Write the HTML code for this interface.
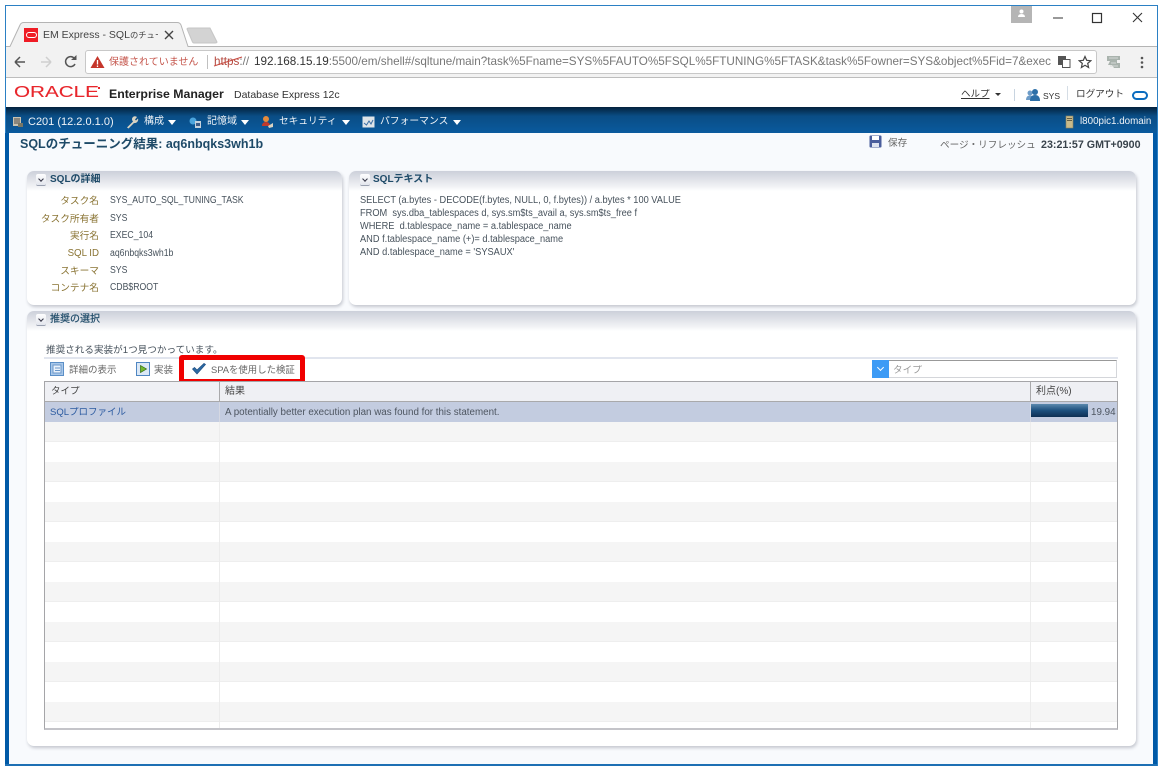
<!DOCTYPE html>
<html lang="ja"><head><meta charset="utf-8">
<style>
html,body{margin:0;padding:0;background:#fff}
body{width:1163px;height:770px;position:relative;overflow:hidden;font-family:"Liberation Sans","Noto Sans CJK JP",sans-serif;font-size:10px;color:#444}
.a{position:absolute;white-space:nowrap}
.t{position:absolute;white-space:nowrap;line-height:14px;filter:blur(.25px)}
.p{position:absolute;background:#fff;border-radius:7px;box-shadow:1px 2px 3px #c4c7cf}
.h{position:absolute;left:0;right:0;top:0;height:20px;border-radius:7px 7px 0 0;background:linear-gradient(#ccd0da,#f0f1f4 75%,#fff)}
.tg{position:absolute;width:10px;height:11px;background:linear-gradient(#fdfdfe,#e3e6ed);border-bottom:1px solid #9aa1b0;border-radius:2px}
.tg:after{content:"";position:absolute;left:2.5px;top:2.5px;width:3px;height:3px;border:solid #334;border-width:0 1px 1px 0;transform:rotate(45deg)}
.ht{color:#1e4a68;font-weight:bold;font-size:10px}
.lb{color:#8a7434;text-align:right;width:60px;font-size:9.7px}
.v{color:#47525c;font-size:10px;transform:scaleX(.87);transform-origin:left}
.sq{color:#47525c;font-size:10px;transform:scaleX(.925);transform-origin:left}
.nav{color:#f0f4f8;font-size:10px}
.tri{position:absolute;width:0;height:0;border:4px solid transparent;border-top:5px solid #fff;border-bottom:0}
</style></head><body>
<!-- window -->
<div class="a" style="left:5px;top:5px;width:1151px;height:759px;border:1px solid #2b80c4;background:#fff"></div>
<!-- tab strip -->
<div class="a" style="left:6px;top:46px;width:1151px;height:32px;background:#f2f2f2;border-top:1px solid #b4b4b4;border-bottom:1px solid #bdbdbd;box-sizing:border-box"></div>
<svg class="a" style="left:6px;top:20px" width="230" height="30"><path d="M4 26.500 L14 5 Q15 2.500 18 2.500 L171 2.500 Q174 2.500 175 5 L182 26.500" fill="#f2f2f2" stroke="#b4b4b4"/><path d="M4.500 26 h177 v4 h-177z" fill="#f2f2f2"/><path d="M181 9 Q181 8 183 8 L204 8 L211 22 Q211 23 209 23 L188 23 Q187 23 186.500 22Z" fill="#d3d3d3" stroke="#c6c6c6"/></svg>
<div class="a" style="left:24px;top:28px;width:14px;height:14px;background:#ef1c25"></div>
<div class="a" style="left:26px;top:32px;width:9px;height:4px;border:1px solid #fff;border-radius:3px"></div>
<div class="t" style="left:43px;top:28px;font-size:10.500px;color:#444;width:115px;overflow:hidden">EM Express - SQL<span style="font-size:8.300px">のチューニ</span></div>
<svg class="a" style="left:163px;top:29px" width="12" height="12"><path d="M2 2L10 10M10 2L2 10" stroke="#444" stroke-width="1.400"/></svg>
<!-- window controls -->
<div class="a" style="left:1011px;top:6px;width:21px;height:17px;background:#b5b5b5"></div>
<svg class="a" style="left:1016px;top:9px" width="11" height="9"><circle cx="5.500" cy="2.500" r="2" fill="#fff"/><path d="M2 8Q2 5 5.500 5T9 8Z" fill="#fff"/></svg>
<svg class="a" style="left:1050px;top:10px" width="100" height="16"><path d="M3 8H13" stroke="#333" stroke-width="1"/><rect x="42.500" y="3.500" width="9" height="9" fill="none" stroke="#333" stroke-width="1.200"/><path d="M83 3L92 12M92 3L83 12" stroke="#333" stroke-width="1.100"/></svg>
<!-- toolbar -->
<svg class="a" style="left:12px;top:52px" width="70" height="20"><path d="M3 10H13M3 10L8 5M3 10L8 15" fill="none" stroke="#555" stroke-width="1.500"/><path d="M29 10H39M39 10L34 5M39 10L34 15" fill="none" stroke="#cfcfcf" stroke-width="1.500"/><path d="M62.500 6.500A5 5 0 1 0 63 12" fill="none" stroke="#555" stroke-width="1.500"/><path d="M59 8H64.500V3Z" fill="#555"/></svg>
<div class="a" style="left:85px;top:50px;width:1012px;height:24px;background:#fff;border:1px solid #c8c8c8;border-radius:3px;box-sizing:border-box"></div>
<svg class="a" style="left:90px;top:55px" width="16" height="14"><path d="M7.500 1L14.500 13H.5Z" fill="#c5362b"/><path d="M7.500 5V9.500M7.500 10.500V12" stroke="#fff" stroke-width="1.300"/></svg>
<div class="t" style="left:109px;top:55px;font-size:10px;line-height:16px;color:#c5564c">保護されていません</div>
<div class="a" style="left:207px;top:55px;width:1px;height:14px;background:#c0c0c0"></div>
<div class="t" style="left:214px;top:54px;font-size:11.700px;line-height:16px;color:#777;width:837px;overflow:hidden"><span style="display:inline-block;width:40px"><span style="color:#b5483e">https</span>://</span><span style="color:#333">192.168.15.19</span>:5500/em/shell#/sqltune/main?task%5Fname=SYS%5FAUTO%5FSQL%5FTUNING%5FTASK&amp;task%5Fowner=SYS&amp;object%5Fid=7&amp;exec</div>
<svg class="a" style="left:213px;top:55px" width="32" height="14"><path d="M1 11L29 2" stroke="#c5483e" stroke-width="1"/></svg>
<svg class="a" style="left:1057px;top:55px" width="14" height="14"><rect x="1" y="1" width="8" height="9" fill="#555"/><rect x="5.500" y="4.500" width="7.500" height="8" fill="#fff" stroke="#555"/></svg>
<svg class="a" style="left:1078px;top:55px" width="14" height="14"><path d="M7 1.500L8.700 5.300L12.800 5.700L9.700 8.400L10.600 12.500L7 10.300L3.400 12.500L4.300 8.400L1.200 5.700L5.300 5.300Z" fill="none" stroke="#444" stroke-width="1.200"/></svg>
<svg class="a" style="left:1106px;top:54px" width="16" height="16"><path d="M1 2H14V6H11V9H14V14H8L6 11H2L4 7H1Z" fill="#a9b3ad"/><path d="M3 4H12M5 9H10M4 12H12" stroke="#d5d9d6"/></svg>
<svg class="a" style="left:1140px;top:56px" width="4" height="14"><circle cx="2" cy="2" r="1.300" fill="#555"/><circle cx="2" cy="6.500" r="1.300" fill="#555"/><circle cx="2" cy="11" r="1.300" fill="#555"/></svg>
<!-- EM header -->
<div class="a" style="left:6px;top:78px;width:1151px;height:29px;background:#fff"></div>
<div class="t" style="left:14px;top:82px;font-size:16px;line-height:22px;color:#e8262c;transform:scaleX(1.290);transform-origin:left;-webkit-text-stroke:.1px #e8262c">ORACLE</div>
<div class="a" style="left:98px;top:87px;width:2px;height:2px;background:#e8262c"></div>
<div class="t" style="left:109px;top:87px;font-size:12.300px;font-weight:bold;color:#222">Enterprise Manager</div>
<div class="t" style="left:234px;top:88px;font-size:10.500px;color:#333">Database Express 12c</div>
<div class="t" style="left:961px;top:88px;font-size:9.500px;color:#333;text-decoration:underline">ヘルプ</div>
<div class="a" style="left:995px;top:93px;border:3px solid transparent;border-top:3px solid #333"></div>
<div class="a" style="left:1014px;top:89px;width:1px;height:12px;background:#c8d4e0"></div>
<svg class="a" style="left:1025px;top:88px" width="16" height="14"><circle cx="5" cy="5" r="2.500" fill="#6d9cc8"/><path d="M1 12Q1 7.500 5 7.500T9 12Z" fill="#6d9cc8"/><circle cx="10" cy="4" r="3" fill="#2c6fa8"/><path d="M5 13Q5 7 10 7T15 13Z" fill="#2c6fa8"/></svg>
<div class="t" style="left:1043px;top:89px;font-size:8.500px;color:#333">SYS</div>
<div class="a" style="left:1067px;top:86px;width:1px;height:14px;background:#d5dde5"></div>
<div class="t" style="left:1076px;top:88px;font-size:9.600px;color:#333">ログアウト</div>
<div class="a" style="left:1132px;top:91px;width:12px;height:5px;border:2px solid #0b6cbf;border-radius:6px"></div>
<!-- navy bar -->
<div class="a" style="left:6px;top:107px;width:1151px;height:26px;background:linear-gradient(#04223d,#0a4d85 35%,#0a5a9e)"></div>
<svg class="a" style="left:12px;top:116px" width="12" height="12"><rect x="1" y="1" width="8" height="9" fill="#c9c2b0"/><path d="M2 3H8M2 5H8M2 7H8" stroke="#4a4a4a"/><rect x="6" y="7" width="5" height="4" fill="#776"/></svg>
<div class="t nav" style="left:28px;top:115px;font-size:11px">C201 (12.2.0.1.0)</div>
<svg class="a" style="left:125px;top:115px" width="14" height="14"><path d="M2 12.500L8 6.500A3 3 0 0 1 12 2L10 4.500L11 5.500L13 3.500A3.500 3.500 0 0 1 9 8L3.500 13.500Z" fill="#d9d3c2"/></svg>
<div class="t nav" style="left:144px;top:115px">構成</div><div class="tri" style="left:168px;top:120px"></div>
<svg class="a" style="left:188px;top:115px" width="14" height="14"><circle cx="5" cy="6" r="3.500" fill="#4ba4dc"/><rect x="7" y="6" width="6" height="7" fill="#c6d2dc"/><rect x="8" y="8" width="4" height="3" fill="#3c5c88"/></svg>
<div class="t nav" style="left:207px;top:115px">記憶域</div><div class="tri" style="left:241px;top:120px"></div>
<svg class="a" style="left:260px;top:115px" width="14" height="14"><circle cx="6" cy="4" r="3" fill="#e58b3c"/><path d="M2 11Q2 7 6 7T10 11Z" fill="#c0392b"/><path d="M8 11L13 8V12L9 13Z" fill="#d9d3c2"/></svg>
<div class="t nav" style="left:279px;top:115px;font-size:9.700px">セキュリティ</div><div class="tri" style="left:342px;top:120px"></div>
<svg class="a" style="left:362px;top:116px" width="13" height="12"><rect x=".5" y=".5" width="12" height="11" fill="#dfe4e8"/><path d="M2 7L4.500 9L7 5L9 8L11 4" fill="none" stroke="#3a6ea5"/></svg>
<div class="t nav" style="left:380px;top:115px;font-size:9.800px">パフォーマンス</div><div class="tri" style="left:453px;top:120px"></div>
<svg class="a" style="left:1065px;top:115px" width="10" height="14"><rect x="1" y="1" width="7" height="12" fill="#c9ba8a" stroke="#8d8260" stroke-width=".6"/><path d="M2 3.500H7M2 5.500H7" stroke="#665f45"/></svg>
<div class="t nav" style="left:1080px;top:115px;font-size:9.800px">l800pic1.domain</div>
<!-- main bg and side borders -->
<div class="a" style="left:5px;top:133px;width:4px;height:632px;background:#0059a6"></div>
<div class="a" style="left:1153px;top:133px;width:4px;height:632px;background:#0059a6"></div>
<div class="a" style="left:9px;top:133px;width:1144px;height:631px;background:#f8fafd"></div>
<div class="a" style="left:5px;top:764px;width:1152px;height:2px;background:#1d6fb4"></div>
<div class="t" style="left:20px;top:137px;font-size:12.500px;font-weight:bold;color:#1e4a68">SQLのチューニング結果: aq6nbqks3wh1b</div>
<svg class="a" style="left:869px;top:135px" width="13" height="13"><rect x=".5" y=".5" width="12" height="12" rx="1" fill="#4a5d9c"/><rect x="3" y="1" width="7" height="4" fill="#fff"/><rect x="3" y="8" width="7" height="4" fill="#dfe3f0"/></svg>
<div class="t" style="left:888px;top:137px;font-size:9.600px;color:#666">保存</div>
<div class="t" style="left:940px;top:139px;font-size:9.600px;color:#666">ページ・リフレッシュ</div>
<div class="t" style="left:1041px;top:138px;font-size:10.700px;font-weight:bold;color:#39434c">23:21:57 GMT+0900</div>
<!-- panel 1 -->
<div class="p" style="left:27px;top:171px;width:315px;height:134px"><div class="h"></div></div>
<div class="tg" style="left:36px;top:174px"></div>
<div class="t ht" style="left:50px;top:173px">SQLの詳細</div>
<div class="t lb" style="left:39px;top:195px">タスク名</div><div class="t v" style="left:110px;top:194px">SYS_AUTO_SQL_TUNING_TASK</div>
<div class="t lb" style="left:39px;top:213px">タスク所有者</div><div class="t v" style="left:110px;top:212px">SYS</div>
<div class="t lb" style="left:39px;top:230px">実行名</div><div class="t v" style="left:110px;top:229px">EXEC_104</div>
<div class="t lb" style="left:39px;top:247px">SQL ID</div><div class="t v" style="left:110px;top:247px">aq6nbqks3wh1b</div>
<div class="t lb" style="left:39px;top:265px">スキーマ</div><div class="t v" style="left:110px;top:264px">SYS</div>
<div class="t lb" style="left:39px;top:282px">コンテナ名</div><div class="t v" style="left:110px;top:281px">CDB$ROOT</div>
<!-- panel 2 -->
<div class="p" style="left:349px;top:171px;width:787px;height:134px"><div class="h"></div></div>
<div class="tg" style="left:360px;top:174px"></div>
<div class="t ht" style="left:373px;top:173px">SQLテキスト</div>
<div class="t sq" style="left:360px;top:194px">SELECT (a.bytes - DECODE(f.bytes, NULL, 0, f.bytes)) / a.bytes * 100 VALUE</div>
<div class="t sq" style="left:360px;top:207px">FROM&nbsp; sys.dba_tablespaces d, sys.sm$ts_avail a, sys.sm$ts_free f</div>
<div class="t sq" style="left:360px;top:220px">WHERE&nbsp; d.tablespace_name = a.tablespace_name</div>
<div class="t sq" style="left:360px;top:233px">AND f.tablespace_name (+)= d.tablespace_name</div>
<div class="t sq" style="left:360px;top:246px">AND d.tablespace_name = 'SYSAUX'</div>
<!-- panel 3 -->
<div class="p" style="left:27px;top:311px;width:1109px;height:435px"><div class="h"></div></div>
<div class="tg" style="left:36px;top:314px"></div>
<div class="t ht" style="left:50px;top:313px;font-weight:normal;-webkit-text-stroke:.2px #1e4a68">推奨の選択</div>
<div class="t" style="left:46px;top:344px;font-size:9.600px;color:#47525c">推奨される実装が1つ見つかっています。</div>
<div class="a" style="left:44px;top:357px;width:1074px;height:2px;background:#e1e5ee"></div>
<!-- toolbar icons -->
<svg class="a" style="left:50px;top:362px" width="14" height="14"><rect x=".5" y=".5" width="13" height="13" fill="#a9c8ea" stroke="#5b8fc7"/><rect x="3" y="3" width="8" height="8" fill="#eaf2fb" stroke="#6a97c9"/><path d="M5 6H10M5 8.500H10" stroke="#6a97c9"/></svg>
<div class="t" style="left:69px;top:364px;font-size:9.500px;color:#666">詳細の表示</div>
<svg class="a" style="left:136px;top:362px" width="14" height="14"><rect x=".5" y=".5" width="13" height="13" fill="#dbe8f6" stroke="#4f86c2"/><path d="M4.500 3.500L10.500 7L4.500 10.500Z" fill="#74b82e" stroke="#2f6b12" stroke-width=".7"/></svg>
<div class="t" style="left:154px;top:364px;font-size:9.500px;color:#666">実装</div>
<div class="a" style="left:179px;top:355px;width:126px;height:29px;border:5px solid #f00000;border-radius:3px;box-sizing:border-box;background:#fff"></div>
<svg class="a" style="left:191px;top:362px" width="16" height="14"><path d="M1.500 7L6 12L14.500 2.500L13 1.500L6 8L3.500 5.500Z" fill="#2d6ba5" stroke="#1e4e82" stroke-width=".7"/></svg>
<div class="t" style="left:211px;top:363px;font-size:9.400px;color:#666">SPAを使用した検証</div>
<!-- filter -->
<div class="a" style="left:872px;top:360px;width:245px;height:18px;border:1px solid #d4d6da;border-top-color:#999;box-sizing:border-box;background:#fff"></div>
<div class="a" style="left:872px;top:360px;width:17px;height:18px;background:#3d9bf5"></div>
<div class="a" style="left:878px;top:365px;width:4px;height:4px;border:solid #fff;border-width:0 1px 1px 0;transform:rotate(45deg)"></div>
<div class="t" style="left:893px;top:364px;font-size:9.600px;color:#999">タイプ</div>
<!-- table -->
<div class="a" style="left:44px;top:381px;width:1074px;height:349px;border:1px solid #a5a5a8;border-bottom:2px solid #c4c4c9;box-sizing:border-box;background:#fff;overflow:hidden">
 <div class="a" style="left:0;top:0;width:1072px;height:19px;background:#eff0f4;border-bottom:1px solid #a9a9ab"></div>
 <div class="a" style="left:0;top:20px;width:1072px;height:20px;background:#c3cce0"></div>
 <div class="a" style="left:0;top:40px;width:1072px;height:19px;background:#f5f5f5;border-bottom:1px solid #eee"></div>
 <div class="a" style="left:0;top:80px;width:1072px;height:19px;background:#f5f5f5;border-bottom:1px solid #eee"></div>
 <div class="a" style="left:0;top:120px;width:1072px;height:19px;background:#f5f5f5;border-bottom:1px solid #eee"></div>
 <div class="a" style="left:0;top:160px;width:1072px;height:19px;background:#f5f5f5;border-bottom:1px solid #eee"></div>
 <div class="a" style="left:0;top:200px;width:1072px;height:19px;background:#f5f5f5;border-bottom:1px solid #eee"></div>
 <div class="a" style="left:0;top:240px;width:1072px;height:19px;background:#f5f5f5;border-bottom:1px solid #eee"></div>
 <div class="a" style="left:0;top:280px;width:1072px;height:19px;background:#f5f5f5;border-bottom:1px solid #eee"></div>
 <div class="a" style="left:0;top:320px;width:1072px;height:19px;background:#f5f5f5;border-bottom:1px solid #eee"></div>
 <div class="a" style="left:0;top:59px;width:1072px;height:1px;background:#eee"></div>
 <div class="a" style="left:174px;top:40px;width:1px;height:310px;background:#ececec"></div>
 <div class="a" style="left:985px;top:40px;width:1px;height:310px;background:#ececec"></div>
 <div class="a" style="left:174px;top:0;width:1px;height:40px;background:#d5d8e2"></div>
 <div class="a" style="left:985px;top:0;width:1px;height:40px;background:#d5d8e2"></div>
 <div class="a" style="left:174px;top:0;width:1px;height:20px;background:#a9a9ab"></div>
 <div class="a" style="left:985px;top:0;width:1px;height:20px;background:#a9a9ab"></div>
</div>
<div class="t" style="left:51px;top:385px;font-size:9.500px;color:#444">タイプ</div>
<div class="t" style="left:225px;top:385px;font-size:10px;color:#444">結果</div>
<div class="t" style="left:1036px;top:385px;font-size:10px;color:#444">利点(%)</div>
<div class="t" style="left:50px;top:406px;font-size:9.500px;color:#2b5aa0">SQLプロファイル</div>
<div class="t" style="left:225px;top:406px;font-size:9.800px;color:#4d5560">A potentially better execution plan was found for this statement.</div>
<div class="a" style="left:1031px;top:404px;width:57px;height:13px;background:linear-gradient(#5a88ad,#1c4f7d 50%,#0e2f52)"></div>
<div class="t" style="left:1091px;top:406px;font-size:9.800px;color:#4d5560">19.94</div>
</body></html>
